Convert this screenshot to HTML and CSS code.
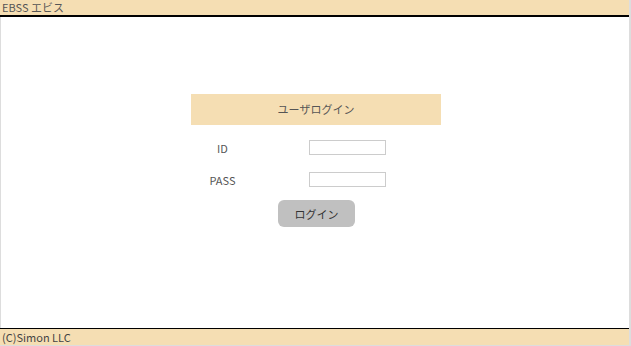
FILE: index.html
```html
<!DOCTYPE html>
<html lang="ja">

<head>
    <meta charset="UTF-8">
    <meta name="viewport" content="width=device-width, initial-scale=1.0">
    <title>EBSS エビス</title>
    <link rel="stylesheet" href="styles.css">
</head>

<body>
    <div class="page">
        <div class="header">EBSS エビス</div>

        <div class="main">
            <div class="login">
                <div class="login-title">ユーザログイン</div>
                <div class="row">
                    <span class="label">ID</span>
                    <input type="text" class="field">
                </div>
                <div class="row">
                    <span class="label">PASS</span>
                    <input type="password" class="field">
                </div>
                <div class="btn-row">
                    <button class="btn">ログイン</button>
                </div>
            </div>
        </div>

        <div class="footer">(C)Simon LLC</div>
    </div>
</body>

</html>
```

FILE: styles.css
```css
* {
    margin: 0;
    padding: 0;
    box-sizing: border-box;
}

body {
    font-family: "Noto Sans CJK JP", "DejaVu Sans", sans-serif;
    font-size: 11px;
    color: #555;
    background-color: #fff;
}

.page {
    width: 631px;
    height: 346px;
    display: flex;
    flex-direction: column;
    border-right: 2px solid #ddd;
    border-bottom: 1px solid #ddd;
}

.header {
    height: 17px;
    line-height: 15px;
    padding-left: 2px;
    background-color: #f5deb3;
    border-bottom: 2px solid #000;
}

.main {
    flex: 1;
    border-left: 1px solid #ddd;
    padding-top: 77px;
}

.login {
    width: 250px;
    margin-left: 190px;
}

.login-title {
    height: 31px;
    line-height: 31px;
    text-align: center;
    background-color: #f5deb3;
}

.row {
    display: flex;
    align-items: center;
    height: 15px;
    margin-top: 15px;
}

.row + .row {
    margin-top: 17px;
}

.label {
    width: 63px;
    text-align: center;
}

.field {
    width: 77px;
    height: 15px;
    margin-left: 55px;
    border: 1px solid #ccc;
    outline: none;
}

.btn-row {
    display: flex;
    justify-content: center;
    margin-top: 13px;
    padding-left: 1px;
}

.btn {
    width: 77px;
    height: 27px;
    border: none;
    border-radius: 6px;
    background-color: #c0c0c0;
    color: #333;
    font-family: inherit;
    font-size: 11px;
}

.footer {
    height: 17px;
    line-height: 16px;
    padding-left: 2px;
    background-color: #f5deb3;
    border-top: 1px solid #000;
    color: #444;
}
```
